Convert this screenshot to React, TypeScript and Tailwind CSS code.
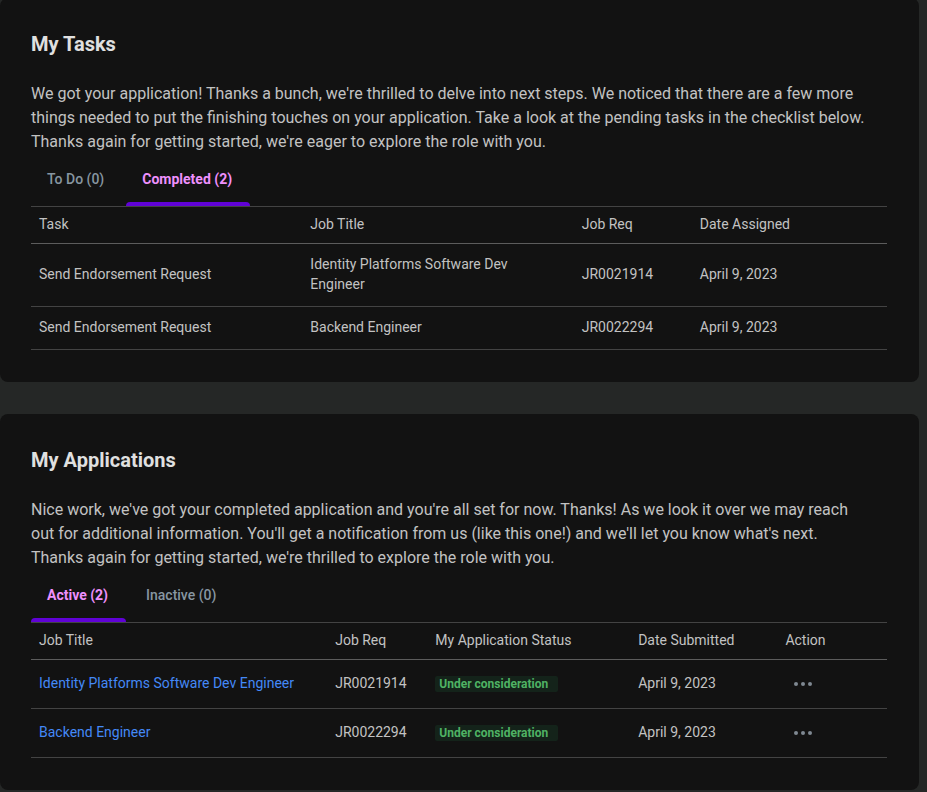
import { useState, type ReactNode } from "react";

type Tab = { id: string; label: string };

function Card({ id, title, text, children }: { id: string; title: string; text: string; children: ReactNode }) {
  return (
    <section aria-labelledby={id} className="rounded-lg bg-[#121212] pt-[34px] pr-8 pb-8 pl-[31px] first:-mt-0.5">
      <h2 id={id} className="text-xl leading-6 font-bold text-[#e0e0e0]">
        {title}
      </h2>
      <p className="mt-[26px] pr-4 text-base leading-6 text-[#c2c2c2]">{text}</p>
      {children}
    </section>
  );
}

function Tabs({ tabs, active, onSelect }: { tabs: Tab[]; active: string; onSelect: (id: string) => void }) {
  return (
    <div role="tablist" className="flex h-[53px] gap-1 border-b border-[#434343]">
      {tabs.map((tab) => {
        const selected = tab.id === active;
        return (
          <button
            key={tab.id}
            type="button"
            role="tab"
            aria-selected={selected}
            onClick={() => onSelect(tab.id)}
            className={
              "flex cursor-pointer flex-col justify-between pt-[15px] text-sm leading-5 " +
              (selected ? "font-bold text-[#ee90fd]" : "font-medium text-[#8796a1]")
            }
          >
            <span className="pr-[18px] pl-4">{tab.label}</span>
            <span className={"h-1 w-full rounded-t-sm " + (selected ? "bg-[#6002d6]" : "bg-transparent")} />
          </button>
        );
      })}
    </div>
  );
}

function Head({ columns }: { columns: string[] }) {
  return (
    <thead>
      <tr className="border-b border-[#5c5c5c]">
        {columns.map((name) => (
          <th key={name} scope="col" className="px-2 pt-[7px] pb-[9px] text-left font-normal">
            {name}
          </th>
        ))}
      </tr>
    </thead>
  );
}

const tasks = [
  { task: "Send Endorsement Request", job: "Identity Platforms Software Dev Engineer", req: "JR0021914", date: "April 9, 2023" },
  { task: "Send Endorsement Request", job: "Backend Engineer", req: "JR0022294", date: "April 9, 2023" },
];

const applications = [
  { job: "Identity Platforms Software Dev Engineer", req: "JR0021914", status: "Under consideration", date: "April 9, 2023" },
  { job: "Backend Engineer", req: "JR0022294", status: "Under consideration", date: "April 9, 2023" },
];

export default function App() {
  const [taskTab, setTaskTab] = useState("completed");
  const [appTab, setAppTab] = useState("active");

  return (
    <main className="flex min-h-screen flex-col gap-8 bg-[#252726] pr-2 pb-0.5 font-[Roboto,sans-serif] text-[#c2c2c2]">
      <Card
        id="tasks"
        title="My Tasks"
        text="We got your application! Thanks a bunch, we're thrilled to delve into next steps. We noticed that there are a few more things needed to put the finishing touches on your application. Take a look at the pending tasks in the checklist below. Thanks again for getting started, we're eager to explore the role with you."
      >
        <Tabs
          tabs={[
            { id: "todo", label: "To Do (0)" },
            { id: "completed", label: "Completed (2)" },
          ]}
          active={taskTab}
          onSelect={setTaskTab}
        />
        <table className="w-full table-fixed border-collapse text-sm leading-5">
          <colgroup>
            <col className="w-[31.7%]" />
            <col className="w-[31.7%]" />
            <col className="w-[13.8%]" />
            <col />
          </colgroup>
          <Head columns={["Task", "Job Title", "Job Req", "Date Assigned"]} />
          <tbody>
            {(taskTab === "completed" ? tasks : []).map((row) => (
              <tr key={row.req} className="border-b border-[#434343]">
                <td className="px-2 pt-2.5 pb-3">{row.task}</td>
                <td className="pt-2.5 pr-8 pb-3 pl-2">{row.job}</td>
                <td className="px-2 pt-2.5 pb-3">{row.req}</td>
                <td className="px-2 pt-2.5 pb-3">{row.date}</td>
              </tr>
            ))}
          </tbody>
        </table>
      </Card>

      <Card
        id="applications"
        title="My Applications"
        text="Nice work, we've got your completed application and you're all set for now. Thanks! As we look it over we may reach out for additional information. You'll get a notification from us (like this one!) and we'll let you know what's next. Thanks again for getting started, we're thrilled to explore the role with you."
      >
        <Tabs
          tabs={[
            { id: "active", label: "Active (2)" },
            { id: "inactive", label: "Inactive (0)" },
          ]}
          active={appTab}
          onSelect={setAppTab}
        />
        <table className="w-full table-fixed border-collapse text-sm leading-5">
          <colgroup>
            <col className="w-[34.6%]" />
            <col className="w-[11.7%]" />
            <col className="w-[23.7%]" />
            <col className="w-[17.2%]" />
            <col />
          </colgroup>
          <Head columns={["Job Title", "Job Req", "My Application Status", "Date Submitted", "Action"]} />
          <tbody>
            {(appTab === "active" ? applications : []).map((row) => (
              <tr key={row.req} className="border-b border-[#434343]">
                <td className="px-2 pb-0.5">
                  <a href="#applications" className="text-[#4489f7]">
                    {row.job}
                  </a>
                </td>
                <td className="px-2 pb-0.5">{row.req}</td>
                <td className="px-2">
                  <span className="flex w-fit rounded-xs bg-[#14231a] pr-2.5 pl-1 text-xs leading-4 font-bold text-[#4fb264]">
                    {row.status}
                  </span>
                </td>
                <td className="px-2 pb-0.5">{row.date}</td>
                <td className="px-2 py-2">
                  <button
                    type="button"
                    aria-label={"Actions for " + row.job}
                    className="ml-0.5 flex size-8 cursor-pointer items-center justify-center"
                  >
                    <svg width="18" height="4" viewBox="0 0 18 4" fill="#7f8892" aria-hidden="true">
                      <circle cx="2" cy="2" r="2" />
                      <circle cx="9" cy="2" r="2" />
                      <circle cx="16" cy="2" r="2" />
                    </svg>
                  </button>
                </td>
              </tr>
            ))}
          </tbody>
        </table>
      </Card>
    </main>
  );
}
